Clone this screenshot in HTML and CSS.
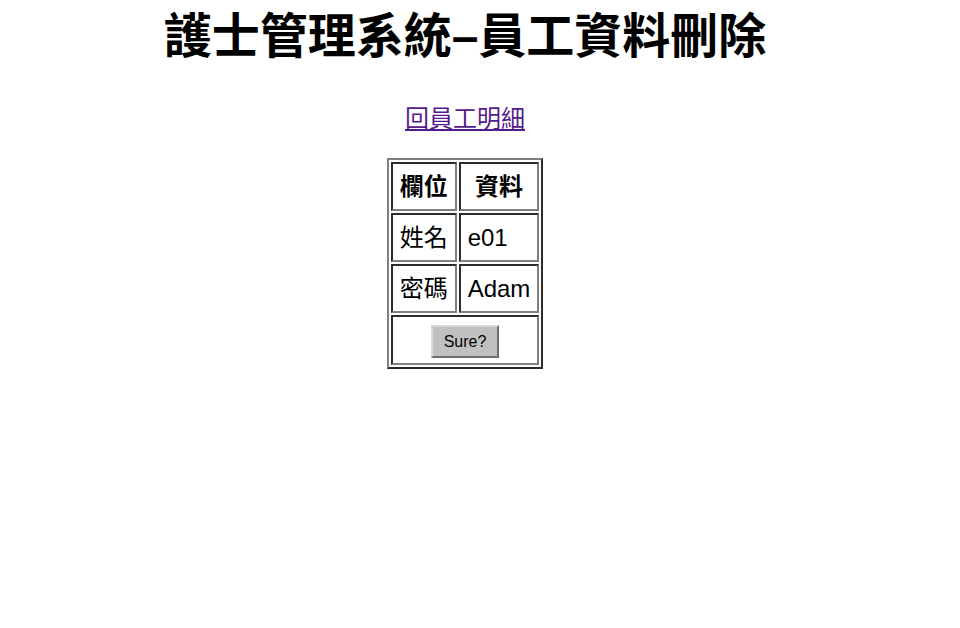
FILE: index.html
```html
<!DOCTYPE html>
<html>
<head>
<meta charset="utf-8">
<link rel="stylesheet" href="styles.css">
</head>
<body>
<div class="page">
  <h1 class="title">護士管理系統–員工資料刪除</h1>
  <p class="back"><a href="#" class="back-link">回員工明細</a></p>
  <form class="form">
    <table class="tbl">
      <tr><th class="cell">欄位</th><th class="cell">資料</th></tr>
      <tr><td class="cell">姓名</td><td class="cell">e01</td></tr>
      <tr><td class="cell">密碼</td><td class="cell">Adam</td></tr>
      <tr><td class="cell cell-center" colspan="2"><button type="button" class="btn">Sure?</button></td></tr>
    </table>
  </form>
</div>
</body>
</html>
```
FILE: styles.css
```css
html, body {
  margin: 0;
  padding: 0;
  background: #fff;
}
body {
  font-family: "Liberation Sans", "Noto Sans CJK TC", sans-serif;
  color: #000;
}
.page {
  width: 930px;
  text-align: center;
}
.title {
  font-family: "Liberation Sans", "Noto Sans CJK TC", sans-serif;
  font-size: 48px;
  font-weight: bold;
  line-height: 1.2;
  margin: 8px 0 0;
}
.back {
  font-size: 24px;
  margin: 38px 0 0;
  line-height: 1.25;
}
.back-link {
  color: #551a8b;
}
.form {
  margin-top: 24px;
}
.tbl {
  margin: 0 auto;
  border-style: solid;
  border-width: 2px;
  border-color: #808080 #2b2b2b #2b2b2b #808080;
  border-spacing: 2px;
  font-size: 24px;
}
.cell {
  border-style: solid;
  border-width: 2px;
  border-color: #2b2b2b #808080 #808080 #2b2b2b;
  padding: 5px 7px;
  line-height: 35px;
  text-align: left;
}
th.cell {
  text-align: center;
  font-weight: bold;
}
.cell-center {
  text-align: center;
}
.btn {
  font-family: "Liberation Sans", sans-serif;
  font-size: 16px;
  background: #c0c0c0;
  border-style: solid;
  border-width: 2px;
  border-color: #d8d8d8 #6e6e6e #6e6e6e #d8d8d8;
  padding: 6px 11px 5px;
  color: #000;
  vertical-align: middle;
}
```
